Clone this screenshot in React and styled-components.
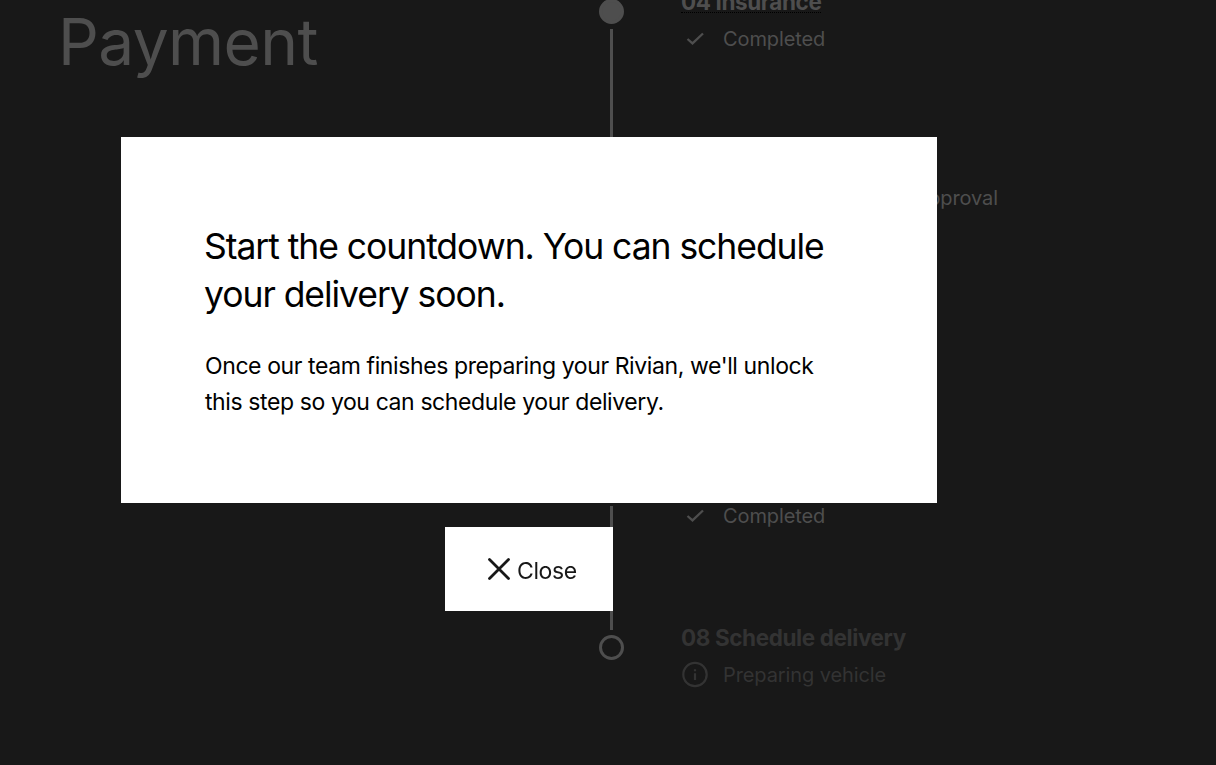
import React from "react";
import styled, { createGlobalStyle, css } from "styled-components";

const GlobalStyle = createGlobalStyle`
  * {
    box-sizing: border-box;
  }
  body {
    margin: 0;
    overflow: hidden;
    background-color: #181818;
    font-family: Inter, "Liberation Sans", sans-serif;
  }
  h1, h2, h3, p {
    margin: 0;
  }
`;

const Page = styled.main`
  display: flex;
  height: 765px;
  overflow: hidden;
  color: #4e4e4e;
`;

const PageTitle = styled.h1`
  width: 599px;
  padding: 2px 0 0 58px;
  font-size: 64px;
  font-weight: 400;
  line-height: 80px;
  letter-spacing: -0.6px;
`;

const Timeline = styled.div`
  margin-top: -1px;
`;

const Step = styled.section`
  display: flex;
  height: 159px;
`;

const Track = styled.div`
  width: 25px;
  display: flex;
  flex-direction: column;
  align-items: center;
  gap: 5px;
`;

const Dot = styled.div`
  width: 25px;
  height: 25px;
  flex: none;
  border: 3px solid #4e4e4e;
  border-radius: 50%;
  background-color: ${({ $done }) => ($done ? "#4e4e4e" : "transparent")};
`;

const Line = styled.div`
  width: 3px;
  height: 124px;
  background-color: #4e4e4e;
`;

const Details = styled.div`
  padding-left: 57px;
  color: ${({ $done }) => ($done ? "#4e4e4e" : "#333333")};
`;

const StepTitle = styled.h3`
  width: max-content;
  height: 18px;
  margin-top: -4px;
  font-size: 22.5px;
  font-weight: 700;
  line-height: 13px;
  letter-spacing: -0.4px;
  white-space: nowrap;
  ${({ $done }) =>
    $done &&
    css`
      border-bottom: 1px dotted #000000;
    `}
`;

const Status = styled.div`
  display: flex;
  align-items: center;
  height: 28px;
  margin-top: 12px;
  font-size: 20px;
  white-space: nowrap;
`;

const StatusIcon = styled.svg`
  width: 28px;
  height: 28px;
  margin-right: 14px;
  fill: none;
  stroke: currentColor;
`;

const StatusText = styled.p`
  min-width: ${({ $width }) => $width || 0}px;
  text-align: right;
  font-weight: 400;
  letter-spacing: -0.1px;
`;

const Overlay = styled.div`
  position: fixed;
  inset: 0;
  padding: 137px 0 0 121px;
`;

const Modal = styled.div`
  width: 816px;
  display: flex;
  flex-direction: column;
  align-items: center;
  gap: 24px;
`;

const Dialog = styled.div`
  width: 100%;
  height: 366px;
  padding: 86px 83px;
  background-color: #ffffff;
  color: #000000;
`;

const Heading = styled.h2`
  font-size: 35.5px;
  font-weight: 400;
  line-height: 48px;
  letter-spacing: -1.05px;
  white-space: nowrap;
`;

const Message = styled.p`
  margin: 29px 0 0 1px;
  font-size: 23px;
  line-height: 36px;
  letter-spacing: -0.4px;
  white-space: nowrap;
`;

const CloseButton = styled.button`
  width: 168px;
  height: 84px;
  display: flex;
  align-items: center;
  padding: 3px 0 0 42px;
  border: 0;
  background-color: #ffffff;
  color: #181818;
  font-family: inherit;
  font-size: 23px;
  letter-spacing: -0.4px;
`;

const CloseIcon = styled.svg`
  width: 24px;
  height: 24px;
  margin: 0 6px 4px 0;
  fill: none;
  stroke: currentColor;
`;

const steps = [
  { title: "04 Insurance", status: "Completed", done: true },
  { title: "05 Documents", status: "Waiting for final approval", done: true, width: 275 },
  { title: "06 Trade-in", done: true },
  { title: "07 Payment", status: "Completed", done: true },
  { title: "08 Schedule delivery", status: "Preparing vehicle", done: false },
];

const CheckIcon = () => (
  <StatusIcon viewBox="0 0 28 28" strokeWidth="2.3">
    <path d="M6.5 14l5 4.4L22 8.5" />
  </StatusIcon>
);

const InfoIcon = () => (
  <StatusIcon viewBox="0 0 28 28" strokeWidth="2.2">
    <circle cx="14" cy="13.5" r="11.7" />
    <path d="M14 12.2v6.8M14 8.2v2" />
  </StatusIcon>
);

const TimelineStep = ({ title, status, done, width, last }) => (
  <Step>
    <Track>
      <Dot $done={done} />
      {!last && <Line />}
    </Track>
    <Details $done={done}>
      <StepTitle $done={done}>{title}</StepTitle>
      {status && (
        <Status>
          {done ? <CheckIcon /> : <InfoIcon />}
          <StatusText $width={width}>{status}</StatusText>
        </Status>
      )}
    </Details>
  </Step>
);

const App = () => (
  <>
    <GlobalStyle />
    <Page>
      <PageTitle>Payment</PageTitle>
      <Timeline>
        {steps.map((step, i) => (
          <TimelineStep key={step.title} {...step} last={i === steps.length - 1} />
        ))}
      </Timeline>
    </Page>
    <Overlay>
      <Modal role="dialog">
        <Dialog>
          <Heading>
            Start the countdown. You can schedule
            <br />
            your delivery soon.
          </Heading>
          <Message>
            Once our team finishes preparing your Rivian, we'll unlock
            <br />
            this step so you can schedule your delivery.
          </Message>
        </Dialog>
        <CloseButton>
          <CloseIcon viewBox="0 0 24 24" strokeWidth="2.8" strokeLinecap="round">
            <path d="M2.5 2.5l19 19M21.5 2.5l-19 19" />
          </CloseIcon>
          Close
        </CloseButton>
      </Modal>
    </Overlay>
  </>
);

export default App;
